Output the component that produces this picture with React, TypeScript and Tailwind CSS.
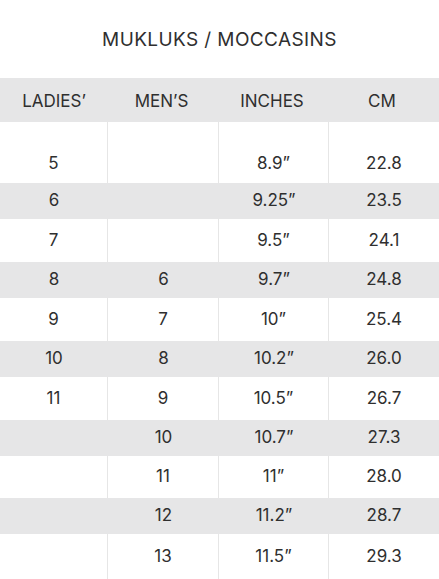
const rows: { h: string; cells: string[] }[] = [
  { h: 'h-[43px]', cells: ['6', '', '9.25”', '23.5'] },
  { h: 'h-[43px]', cells: ['7', '', '9.5”', '24.1'] },
  { h: 'h-[36px]', cells: ['8', '6', '9.7”', '24.8'] },
  { h: 'h-[43px]', cells: ['9', '7', '10”', '25.4'] },
  { h: 'h-[36px]', cells: ['10', '8', '10.2”', '26.0'] },
  { h: 'h-[43px]', cells: ['11', '9', '10.5”', '26.7'] },
  { h: 'h-[36px]', cells: ['', '10', '10.7”', '27.3'] },
  { h: 'h-[42px]', cells: ['', '11', '11”', '28.0'] },
  { h: 'h-[36px]', cells: ['', '12', '11.2”', '28.7'] },
  { h: 'h-[45px]', cells: ['', '13', '11.5”', '29.3'] },
]

const cols = 'grid grid-cols-[108px_111px_110px_110px]'

export default function App() {
  return (
    <div
      className="h-[579px] w-[439px] overflow-hidden bg-white text-[#2f2f2f]"
      style={{ fontFamily: 'Inter, "Open Sans", sans-serif' }}
    >
      <div className="flex h-[78px] items-center justify-center pt-[2px] text-[19px] tracking-[0.4px]">
        MUKLUKS / MOCCASINS
      </div>

      <div className={`${cols} h-[44px] items-center bg-[#e6e6e7] pt-[3px] text-[17px]`}>
        <span className="text-center">LADIES’</span>
        <span className="pr-[4px] text-center">MEN’S</span>
        <span className="pr-[4px] text-center">INCHES</span>
        <span className="pr-[4px] text-center">CM</span>
      </div>

      <div className={`${cols} h-[61px] divide-x divide-[#e6e6e6] text-[17px]`}>
        <span className="pt-[29px] text-center">5</span>
        <span className="pt-[29px] text-center"></span>
        <span className="pt-[29px] text-center">8.9”</span>
        <span className="pt-[29px] text-center">22.8</span>
      </div>

      {rows.map((r, i) => {
        const gray = i % 2 === 0
        return (
          <div
            key={i}
            className={`${cols} ${gray ? 'h-[36px] bg-[#e6e6e7]' : r.h + ' divide-x divide-[#e6e6e6]'} text-[17px]`}
          >
            {r.cells.map((c, j) => (
              <span key={j} className="flex items-center justify-center">
                {c}
              </span>
            ))}
          </div>
        )
      })}
    </div>
  )
}
